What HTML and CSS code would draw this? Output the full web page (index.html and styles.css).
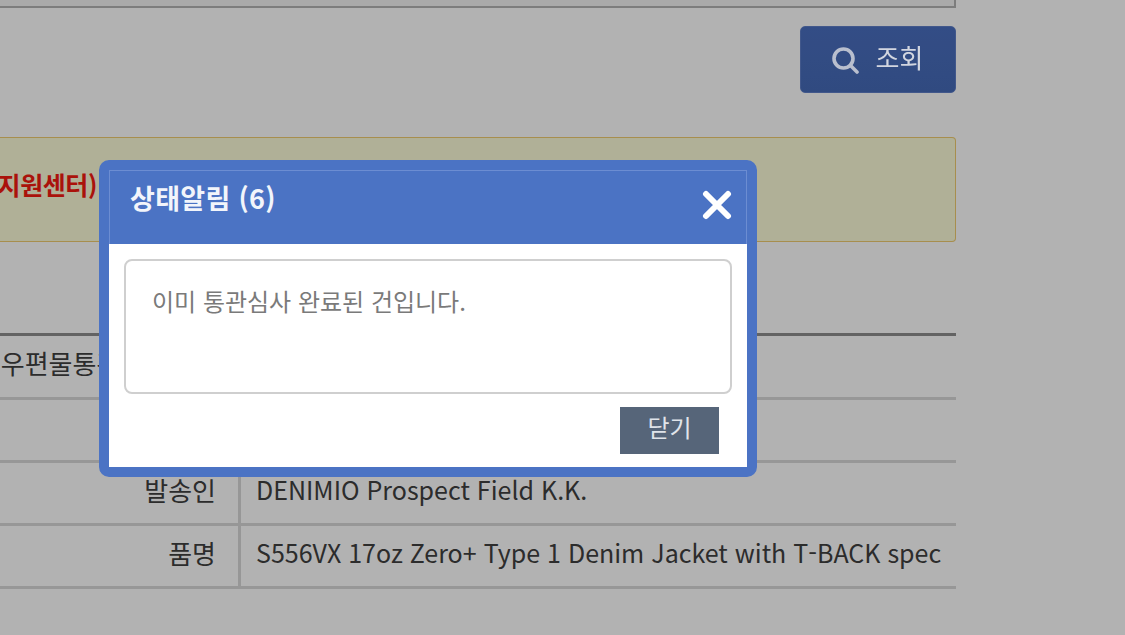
FILE: index.html
```html
<!DOCTYPE html>
<html lang="ko">
<head>
<meta charset="utf-8">
<title>상태알림</title>
<link rel="stylesheet" href="styles.css">
</head>
<body>
<main class="page">
  <div class="top-box"></div>
  <div class="toolbar">
    <button class="search-btn" type="button">
      <svg class="search-icon" viewBox="0 0 28 28" aria-hidden="true"><circle cx="12.5" cy="12.5" r="9.5"/><path d="M19.5 19.5 26 26"/></svg>
      <span class="search-label">조회</span>
    </button>
  </div>
  <div class="notice"><strong class="notice-text">통관지원센터)</strong></div>
  <div class="info-table">
    <div class="row row-first"><div class="th">우편물통관심사번호</div><div class="td"></div></div>
    <div class="row"><div class="th"></div><div class="td"></div></div>
    <div class="row"><div class="th">발송인</div><div class="td">DENIMIO Prospect Field K.K.</div></div>
    <div class="row"><div class="th">품명</div><div class="td">S556VX 17oz Zero+ Type 1 Denim Jacket with T-BACK spec</div></div>
  </div>
</main>
<div class="overlay"></div>
<section class="modal">
  <header class="modal-head">
    <h2 class="modal-title">상태알림 (6)</h2>
    <svg class="close-icon" viewBox="0 0 30 30" aria-hidden="true"><path d="M4 4 26 26M26 4 4 26"/></svg>
  </header>
  <div class="modal-body">
    <div class="message">이미 통관심사 완료된 건입니다.</div>
    <div class="modal-actions"><button class="close-btn" type="button">닫기</button></div>
  </div>
</section>
</body>
</html>
```
FILE: styles.css
```css
* { box-sizing: border-box; }
html, body { margin: 0; height: 100%; overflow: hidden; }
body {
  background: #fff;
  font-family: "Noto Sans CJK KR", "Noto Sans", sans-serif;
  color: #333;
}
.page { width: 956px; }
.top-box {
  height: 8px;
  background: #f4f4f4;
  border-right: 2px solid #b4b4b4;
  border-bottom: 2px solid #b4b4b4;
}
.toolbar {
  display: flex;
  justify-content: flex-end;
  padding-top: 18px;
}
.search-btn {
  display: flex;
  align-items: center;
  justify-content: center;
  gap: 17px;
  width: 156px;
  height: 67px;
  padding: 0 2px 6px 0;
  border: 1px solid #5f7fc8;
  border-radius: 5px;
  background: linear-gradient(#4a6fc0, #466bb8);
  color: #d2d6e0;
  font: inherit;
  font-size: 26px;
}
.search-label { position: relative; z-index: 2; }
.search-icon {
  position: relative;
  z-index: 2;
  width: 28px;
  height: 28px;
  margin-top: 7px;
  fill: none;
  stroke: #b9bfce;
  stroke-width: 3.6;
  stroke-linecap: round;
}
.notice {
  height: 105px;
  margin-top: 44px;
  padding-top: 28px;
  padding-right: 858px;
  background: #fcfcd8;
  border: 1px solid #f0cc70;
  border-left: 0;
  border-radius: 0 4px 4px 0;
  display: flex;
  justify-content: flex-end;
  align-items: flex-start;
  white-space: nowrap;
  overflow: hidden;
}
.notice-text {
  color: #f41a10;
  font-size: 25px;
  line-height: 36px;
  font-weight: 700;
  letter-spacing: -0.4px;
  flex: none;
}
.info-table { margin-top: 91px; border-top: 3px solid #8e8e8e; }
.row {
  display: grid;
  grid-template-columns: 241px 1fr;
  height: 63px;
  border-bottom: 3px solid #d8d8d8;
}
.row-first { height: 64px; }
.th {
  padding-right: 22px;
  border-right: 3px solid #d8d8d8;
  text-align: right;
  font-size: 26px;
  line-height: 53px;
  white-space: nowrap;
  color: #404040;
}
.td {
  padding-left: 15px;
  font-size: 25px;
  line-height: 53px;
  white-space: nowrap;
  color: #404040;
}
.overlay { position: fixed; inset: 0; z-index: 1; background: rgba(0, 0, 0, .3); }
.modal {
  position: fixed;
  z-index: 3;
  left: 99px;
  top: 160px;
  width: 658px;
  height: 317px;
  display: flex;
  flex-direction: column;
  border: 10px solid #4b73c4;
  border-radius: 10px;
  background: #fff;
}
.modal-head {
  position: relative;
  height: 74px;
  padding: 7px 0 0 20px;
  background: #4b73c4;
  border-top: 1px solid #6c8dd2;
  border-left: 1px solid #6c8dd2;
  border-right: 1px solid #6c8dd2;
}
.modal-title { margin: 0; font-size: 27px; line-height: 40px; font-weight: 600; letter-spacing: .3px; color: #f2f5fb; }
.close-icon {
  position: absolute;
  right: 14px;
  top: 19px;
  width: 30px;
  height: 30px;
  fill: none;
  stroke: #fff;
  stroke-width: 6;
  stroke-linecap: round;
}
.modal-body { flex: 1; padding: 15px 15px 0; display: flex; flex-direction: column; }
.message {
  height: 135px;
  padding: 22px 26px;
  border: 2px solid #cfcfcf;
  border-radius: 8px;
  font-size: 24px;
  line-height: 36px;
  color: #7a7a7a;
}
.modal-actions { display: flex; justify-content: flex-end; padding: 13px 13px 0 0; }
.close-btn {
  width: 99px;
  height: 47px;
  padding: 0 0 8px;
  border: 0;
  background: #566579;
  color: #e0e4ea;
  font: inherit;
  font-size: 24px;
}
```
